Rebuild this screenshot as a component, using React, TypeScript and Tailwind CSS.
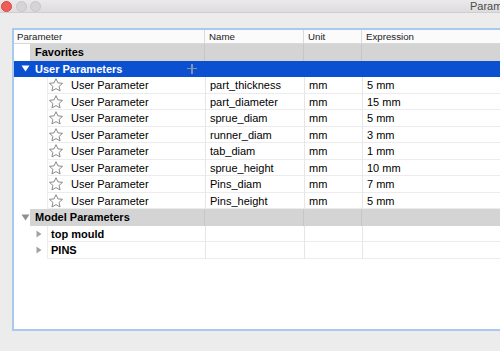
import React from "react";

function Star() {
  return (
    <svg width="16" height="16" viewBox="0 0 24 24" fill="none" stroke="#8a8a8a" strokeWidth="1.5" strokeLinejoin="round">
      <path d="M12 2.5l2.9 6.3 6.9.7-5.2 4.6 1.5 6.8L12 17.4l-6.1 3.5 1.5-6.8-5.2-4.6 6.9-.7z" />
    </svg>
  );
}

function TriDown({ color }: { color: string }) {
  return (
    <svg width="9" height="7" viewBox="0 0 9 7">
      <path d="M0.5 0.5h8l-4 6z" fill={color} />
    </svg>
  );
}

function TriRight() {
  return (
    <svg width="6" height="8" viewBox="0 0 6 8">
      <path d="M0.5 0.5v7l5-3.5z" fill="#a3a3a3" />
    </svg>
  );
}

const params = [
  ["part_thickness", "5 mm"],
  ["part_diameter", "15 mm"],
  ["sprue_diam", "5 mm"],
  ["runner_diam", "3 mm"],
  ["tab_diam", "1 mm"],
  ["sprue_height", "10 mm"],
  ["Pins_diam", "7 mm"],
  ["Pins_height", "5 mm"],
];

function GrayRow({ label, tri }: { label: string; tri: boolean }) {
  return (
    <div className="flex h-[16.5px] shrink-0">
      <div className="w-[16px] shrink-0 flex items-center justify-end">
        {tri && <TriDown color="#8f8f8f" />}
      </div>
      <div className="grid grid-cols-[174px_99px_58px_1fr] flex-1 bg-[#d4d4d4]">
        <div className="flex items-center pl-[5px] font-bold text-[11px] text-black">{label}</div>
        <div className="border-l border-[#c6c6c6]" />
        <div className="border-l border-[#c6c6c6]" />
        <div className="border-l border-[#c6c6c6]" />
      </div>
    </div>
  );
}

export default function App() {
  return (
    <div
      className="w-[500px] h-[351px] overflow-hidden bg-[#ececec] flex flex-col"
      style={{ fontFamily: '"Liberation Sans", Arial, sans-serif' }}
    >
      {/* title bar */}
      <div className="h-[13px] shrink-0 flex items-center bg-gradient-to-b from-[#ebe9eb] to-[#dedcde] border-b border-[#cfcfcf] whitespace-nowrap">
        <div className="flex items-center gap-[3.5px] pl-[1px]">
          <div className="w-[11px] h-[11px] rounded-full bg-[#ee5d56] border border-[#e0443e]" />
          <div className="w-[11px] h-[11px] rounded-full bg-[#d6d5d6] border border-[#c8c7c8]" />
          <div className="w-[11px] h-[11px] rounded-full bg-[#d6d5d6] border border-[#c8c7c8]" />
        </div>
        <div className="ml-[429px] text-[11px] text-[#4c4c4c] leading-none">Parameters</div>
      </div>

      {/* body */}
      <div className="pt-[15px] pl-[12px] flex-1 flex flex-col">
        <div className="w-[500px] h-[303px] border-2 border-[#a9c9f0] bg-white flex flex-col overflow-hidden">
          {/* header */}
          <div className="grid grid-cols-[190px_99px_58px_1fr] h-[14px] shrink-0 border-b border-[#d8d8d8] bg-[#fbfbfb] text-[9.7px] text-[#222]">
            <div className="flex items-center pl-[3px]">Parameter</div>
            <div className="flex items-center pl-[4px] border-l border-[#dadada]">Name</div>
            <div className="flex items-center pl-[4px] border-l border-[#dadada]">Unit</div>
            <div className="flex items-center pl-[4px] border-l border-[#dadada]">Expression</div>
          </div>

          <GrayRow label="Favorites" tri={false} />

          {/* User Parameters selected */}
          <div className="grid grid-cols-[190px_99px_58px_1fr] h-[16.5px] shrink-0 bg-[#0b50d0]">
            <div className="flex items-center">
              <div className="w-[16px] flex justify-end">
                <TriDown color="#ffffff" />
              </div>
              <div className="pl-[5px] font-bold text-[11px] text-white">User Parameters</div>
              <div className="ml-auto mr-[7px] relative w-[10px] h-[10px]">
                <div className="absolute left-[4px] top-0 w-[1.5px] h-[10px] bg-[#8392b0]" />
                <div className="absolute top-[4px] left-0 w-[10px] h-[1.5px] bg-[#8392b0]" />
              </div>
            </div>
            <div />
            <div />
            <div />
          </div>

          {params.map(([name, expr]) => (
            <div key={name} className="flex h-[16.5px] shrink-0">
              <div className="w-[33px] shrink-0" />
              <div className="grid grid-cols-[157px_99px_58px_1fr] flex-1 border-l border-b border-[#ececec] text-[11px] text-black">
                <div className="flex items-center gap-[7px]">
                  <Star />
                  <span>User Parameter</span>
                </div>
                <div className="flex items-center pl-[4px] border-l border-[#e6e6e6]">{name}</div>
                <div className="flex items-center pl-[4px] border-l border-[#e6e6e6]">mm</div>
                <div className="flex items-center pl-[4px] border-l border-[#e6e6e6]">{expr}</div>
              </div>
            </div>
          ))}

          <GrayRow label="Model Parameters" tri={true} />

          {["top mould", "PINS"].map((label) => (
            <div key={label} className="flex h-[16.5px] shrink-0">
              <div className="w-[28px] shrink-0 flex items-center justify-end">
                <TriRight />
              </div>
              <div className="w-[5px] shrink-0" />
              <div className="grid grid-cols-[157px_99px_58px_1fr] flex-1 border-l border-b border-[#ececec] text-[11px] text-black">
                <div className="flex items-center pl-[3px] font-bold">{label}</div>
                <div className="border-l border-[#e6e6e6]" />
                <div className="border-l border-[#e6e6e6]" />
                <div className="border-l border-[#e6e6e6]" />
              </div>
            </div>
          ))}
        </div>
      </div>
    </div>
  );
}
